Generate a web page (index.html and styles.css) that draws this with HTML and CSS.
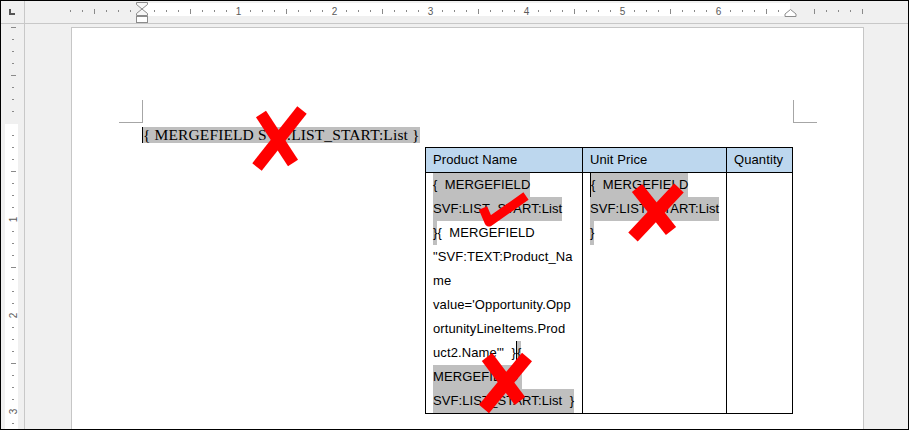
FILE: index.html
```html
<!DOCTYPE html>
<html lang="en">
<head>
<meta charset="utf-8">
<title>Document</title>
<link rel="stylesheet" href="styles.css">
</head>
<body>
<div class="window">
  <div class="corner">
    <svg width="23" height="22" viewBox="0 0 23 22"><path d="M8 8h2v4h4v2h-6z" fill="#555"/></svg>
  </div>
  <div class="hruler">
    <svg width="883" height="22" viewBox="0 0 883 22">
      <rect x="117" y="2" width="648" height="13" fill="#fff"/>
      <path stroke="#8a8a8a" stroke-width="1" fill="none" d="M45.5 9v2M57.5 9v2M81.5 9v2M93.5 9v2M105.5 9v2M129.5 9v2M141.5 9v2M153.5 9v2M177.5 9v2M189.5 9v2M201.5 9v2M225.5 9v2M237.5 9v2M249.5 9v2M273.5 9v2M285.5 9v2M297.5 9v2M321.5 9v2M333.5 9v2M345.5 9v2M369.5 9v2M381.5 9v2M393.5 9v2M417.5 9v2M429.5 9v2M441.5 9v2M465.5 9v2M477.5 9v2M489.5 9v2M513.5 9v2M525.5 9v2M537.5 9v2M561.5 9v2M573.5 9v2M585.5 9v2M609.5 9v2M621.5 9v2M633.5 9v2M657.5 9v2M669.5 9v2M681.5 9v2M705.5 9v2M717.5 9v2M729.5 9v2M753.5 9v2M801.5 9v2M813.5 9v2M825.5 9v2M69.5 8v5M165.5 8v5M261.5 8v5M357.5 8v5M453.5 8v5M549.5 8v5M645.5 8v5M741.5 8v5M789.5 8v5M837.5 8v5"/>
      <g class="rnum" fill="#5a5a5a" text-anchor="middle" dominant-baseline="central">
        <text x="213.5" y="10">1</text>
        <text x="309.5" y="10">2</text>
        <text x="405.5" y="10">3</text>
        <text x="501.5" y="10">4</text>
        <text x="597.5" y="10">5</text>
        <text x="693.5" y="10">6</text>
      </g>
      <g fill="#f7f7f7" stroke="#8c8c8c" stroke-width="1">
        <polygon points="111.5,1.5 122.5,1.5 122.5,3.5 117,8 111.5,3.5"/>
        <polygon points="117,8 122.5,12.5 122.5,14.5 111.5,14.5 111.5,12.5"/>
        <rect x="111.5" y="15.5" width="11" height="6" fill="#fff"/>
        <polygon points="765.5,8.5 771,13 771,15.5 760,15.5 760,13" fill="#fff"/>
      </g>
    </svg>
  </div>
  <div class="vruler">
    <svg width="23" height="405" viewBox="0 0 23 405">
      <rect x="4" y="100" width="13" height="305" fill="#fff"/>
      <path stroke="#8a8a8a" stroke-width="1" fill="none" d="M11 15.5h2M11 27.5h2M11 39.5h2M11 63.5h2M11 75.5h2M11 87.5h2M11 111.5h2M11 123.5h2M11 135.5h2M11 159.5h2M11 171.5h2M11 183.5h2M11 207.5h2M11 219.5h2M11 231.5h2M11 255.5h2M11 267.5h2M11 279.5h2M11 303.5h2M11 315.5h2M11 327.5h2M11 351.5h2M11 363.5h2M11 375.5h2M11 399.5h2M10 3.5h5M10 51.5h5M10 147.5h5M10 243.5h5M10 339.5h5"/>
      <g class="rnum" fill="#5a5a5a" text-anchor="middle" dominant-baseline="central">
        <text x="12" y="195.5" transform="rotate(-90 12 195.5)">1</text>
        <text x="12" y="291.5" transform="rotate(-90 12 291.5)">2</text>
        <text x="12" y="387.5" transform="rotate(-90 12 387.5)">3</text>
      </g>
    </svg>
  </div>
  <div class="main">
    <div class="page">
      <div class="crop-row">
        <span class="crop crop-left"></span>
        <span class="crop crop-right"></span>
      </div>
      <div class="body">
        <p class="field-line"><span class="fhl">{ MERGEFIELD SVF:LIST_START:List }</span></p>
        <div class="table">
          <div class="cell head">Product Name</div>
          <div class="cell head">Unit Price</div>
          <div class="cell head">Quantity</div>
          <div class="cell">
            <div class="ln"><span class="hl">{  MERGEFIELD</span></div>
            <div class="ln"><span class="hl">SVF:LIST_START:List</span></div>
            <div class="ln"><span class="hl">}</span>{  MERGEFIELD</div>
            <div class="ln">"SVF:TEXT:Product_Na</div>
            <div class="ln">me</div>
            <div class="ln">value='Opportunity.Opp</div>
            <div class="ln">ortunityLineItems.Prod</div>
            <div class="ln">uct2.Name'"  }<span class="hl caret">{</span></div>
            <div class="ln"><span class="hl">MERGEFIELD </span></div>
            <div class="ln"><span class="hl">SVF:LIST_START:List  }</span></div>
          </div>
          <div class="cell">
            <div class="ln"><span class="hl caret">{  MERGEFIELD</span></div>
            <div class="ln"><span class="hl">SVF:LIST_START:List</span></div>
            <div class="ln"><span class="hl">}</span></div>
          </div>
          <div class="cell"></div>
        </div>
      </div>
    </div>
  </div>
  <svg class="marks" width="909" height="430" viewBox="0 0 909 430">
    <g stroke="#ff0000" fill="none" stroke-width="12">
      <line x1="302" y1="110" x2="257" y2="167"/>
      <line x1="261" y1="114" x2="293" y2="163"/>
      <line x1="679" y1="188" x2="633" y2="237" stroke-width="13"/>
      <line x1="637" y1="188" x2="671" y2="231" stroke-width="13"/>
      <line x1="527" y1="357" x2="484" y2="409" stroke-width="13"/>
      <line x1="487" y1="357" x2="520" y2="401" stroke-width="13"/>
      <polyline points="483,208 489,222 526,196" stroke-width="9" stroke-linejoin="round"/>
    </g>
  </svg>
</div>
</body>
</html>
```

FILE: styles.css
```css
body {
  margin: 0;
  background: #ffffff;
}

.window {
  position: relative;
  width: 909px;
  height: 430px;
  box-sizing: border-box;
  border: 1px solid #000;
  display: grid;
  grid-template-columns: 23px 883px;
  grid-template-rows: 22px 405px;
  gap: 1px;
  background: #c8c8c8;
  overflow: hidden;
}

.corner,
.hruler,
.vruler,
.main {
  background: #f0f0f0;
  overflow: hidden;
}

.corner svg,
.hruler svg,
.vruler svg {
  display: block;
}

.rnum {
  font-family: "Liberation Sans", Arial, sans-serif;
  font-size: 10px;
}

.page {
  margin: 3px 0 0 46px;
  width: 793px;
  height: 600px;
  box-sizing: border-box;
  background: #fff;
  border: 1px solid #c6c6c6;
  padding: 72px 0 0 47px;
}

.crop-row {
  display: flex;
  justify-content: space-between;
  width: 698px;
  height: 23px;
}

.crop {
  width: 24px;
  height: 23px;
  box-sizing: border-box;
  border-bottom: 1px solid #a6a6a6;
}

.crop-left {
  border-right: 1px solid #a6a6a6;
}

.crop-right {
  border-left: 1px solid #a6a6a6;
}

.body {
  padding: 4px 0 0 23px;
}

.field-line {
  margin: 0;
  height: 16px;
  font-family: "Liberation Serif", "Times New Roman", serif;
  font-size: 15.5px;
  line-height: 16px;
  letter-spacing: 0.12px;
  white-space: pre;
  color: #000;
}

.fhl {
  display: inline-block;
  height: 16px;
  background: #bfbfbf;
  border-left: 1px solid #000;
}

.table {
  margin: 4px 0 0 283px;
  display: grid;
  grid-template-columns: 157px 144px 66px;
  width: 368px;
  box-sizing: border-box;
  border-right: 1px solid #000;
  border-bottom: 1px solid #000;
  font-family: "Liberation Sans", Arial, sans-serif;
  font-size: 13px;
  letter-spacing: 0.1px;
  color: #000;
}

.cell {
  border-left: 1px solid #000;
  border-top: 1px solid #000;
  padding-left: 7px;
  line-height: 24px;
  overflow: hidden;
}

.head {
  background: #bdd7ee;
  height: 25px;
  box-sizing: border-box;
}

.ln {
  height: 24px;
  white-space: pre;
}

.hl {
  display: inline-block;
  height: 24px;
  background: #bfbfbf;
}

.caret {
  border-left: 1px solid #000;
}

.marks {
  position: absolute;
  left: -1px;
  top: -1px;
  pointer-events: none;
}
```
